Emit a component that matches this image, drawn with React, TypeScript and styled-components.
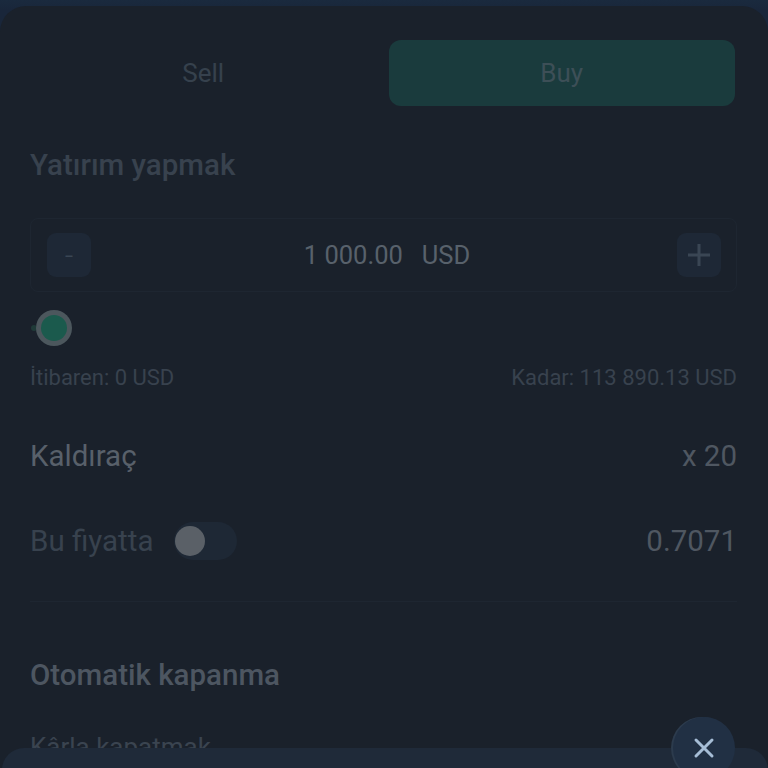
import React from "react";
import styled, { createGlobalStyle } from "styled-components";

const Global = createGlobalStyle`
  html, body { margin: 0; padding: 0; background: #19283a; }
  body { font-family: Roboto, "Noto Sans", sans-serif; overflow: hidden; }
  #root { width: 768px; height: 768px; overflow: hidden; position: relative; }
`;

const Page = styled.div`
  height: 768px;
  background: linear-gradient(180deg, #1a2a3e 0px, #19263a 10px);
  padding-top: 6px;
  box-sizing: border-box;
  position: relative;
  overflow: hidden;
`;

const Card = styled.div`
  background: #1a212b;
  border-radius: 26px 26px 0 0;
  height: 100%;
  padding: 34px 31px 0 30px;
  box-sizing: border-box;
  display: flex;
  flex-direction: column;
`;

const Segmented = styled.div`
  display: grid;
  grid-template-columns: 1fr 1fr;
  gap: 12px;
  height: 66px;
  margin-right: 2px;
`;

const SegButton = styled.div<{ $active?: boolean }>`
  display: flex;
  align-items: center;
  justify-content: center;
  border-radius: 12px;
  font-size: 26px;
  color: ${(p) => (p.$active ? "#3d4f57" : "#36414d")};
  background: ${(p) => (p.$active ? "#1a3b3d" : "transparent")};
`;

const SectionTitle = styled.div<{ $mt: number; $bright?: boolean }>`
  margin-top: ${(p) => p.$mt}px;
  font-size: 29.5px;
  font-weight: 500;
  color: ${(p) => (p.$bright ? "#4d5661" : "#38424e")};
  line-height: 34px;
`;

const InputBox = styled.div`
  margin-top: 36px;
  height: 74px;
  border: 1px solid #1e2631;
  border-radius: 8px;
  display: flex;
  align-items: center;
  padding: 0 15px 0 16px;
  box-sizing: border-box;
`;

const StepBtn = styled.div`
  width: 44px;
  height: 44px;
  border-radius: 9px;
  background: #1e2836;
  display: flex;
  align-items: center;
  justify-content: center;
  color: #3a4654;
  font-size: 30px;
  font-weight: 300;
`;

const Amount = styled.div`
  flex: 1;
  display: flex;
  justify-content: center;
  gap: 19px;
  font-size: 25.5px;
  color: #58616b;
  padding-left: 6px;
`;

const SliderRow = styled.div`
  margin-top: 18px;
  height: 36px;
  display: flex;
  align-items: center;
`;

const SliderDot = styled.div`
  width: 6px;
  height: 6px;
  border-radius: 50%;
  background: #1f3a38;
  margin-left: 1px;
`;

const Thumb = styled.div`
  width: 36px;
  height: 36px;
  border-radius: 50%;
  background: #4c575d;
  margin-left: -1px;
  display: flex;
  align-items: center;
  justify-content: center;
  &::after {
    content: "";
    width: 26px;
    height: 26px;
    border-radius: 50%;
    background: #1b5a4d;
  }
`;

const RangeRow = styled.div`
  margin-top: 19px;
  display: flex;
  justify-content: space-between;
  font-size: 22px;
  line-height: 26px;
  color: #38424e;
`;

const Row = styled.div<{ $mt: number }>`
  margin-top: ${(p) => p.$mt}px;
  display: flex;
  align-items: center;
  justify-content: space-between;
  height: 40px;
`;

const Label = styled.div<{ $dim?: boolean }>`
  font-size: 29.5px;
  color: ${(p) => (p.$dim ? "#38424e" : "#58606a")};
  display: flex;
  align-items: center;
  gap: 21px;
`;

const Value = styled.div`
  font-size: 29.5px;
  color: #4f5761;
`;

const Toggle = styled.div`
  width: 63px;
  height: 38px;
  border-radius: 19px;
  background: #1e2835;
  display: flex;
  align-items: center;
  padding-left: 1px;
  box-sizing: border-box;
  &::before {
    content: "";
    width: 30px;
    height: 30px;
    border-radius: 50%;
    background: #5a6067;
  }
`;

const Divider = styled.div`
  margin-top: 40px;
  height: 1px;
  background: #1e2631;
`;

const SubLabel = styled.div`
  margin-top: 40px;
  font-size: 26px;
  color: #3a4450;
`;

const Sheet = styled.div`
  position: absolute;
  left: 2px;
  right: 0;
  top: 748px;
  height: 60px;
  background: #1f2a39;
  border-radius: 22px 22px 0 0;
`;

const CloseBtn = styled.div`
  position: absolute;
  left: 673px;
  top: 717px;
  width: 62px;
  height: 62px;
  border-radius: 50%;
  background: #213044;
  box-shadow: -2px 0 0 #2c3b4d;
  display: flex;
  align-items: center;
  justify-content: center;
`;

export default function App() {
  return (
    <>
      <Global />
      <Page>
        <Card>
          <Segmented>
            <SegButton>Sell</SegButton>
            <SegButton $active>Buy</SegButton>
          </Segmented>
          <SectionTitle $mt={42}>Yatırım yapmak</SectionTitle>
          <InputBox>
            <StepBtn>-</StepBtn>
            <Amount>
              <span>1 000.00</span>
              <span>USD</span>
            </Amount>
            <StepBtn>
              <svg width="24" height="24" viewBox="0 0 24 24">
                <path d="M12 1v22M1 12h22" stroke="#3a4654" strokeWidth="3" />
              </svg>
            </StepBtn>
          </InputBox>
          <SliderRow>
            <SliderDot />
            <Thumb />
          </SliderRow>
          <RangeRow>
            <span>İtibaren: 0 USD</span>
            <span>Kadar: 113 890.13 USD</span>
          </RangeRow>
          <Row $mt={45}>
            <Label>Kaldıraç</Label>
            <Value>x 20</Value>
          </Row>
          <Row $mt={45}>
            <Label $dim>
              Bu fiyatta
              <Toggle />
            </Label>
            <Value>0.7071</Value>
          </Row>
          <Divider />
          <SectionTitle $mt={56} $bright>
            Otomatik kapanma
          </SectionTitle>
          <SubLabel>Kârla kapatmak</SubLabel>
        </Card>
        <Sheet />
        <CloseBtn>
          <svg width="22" height="22" viewBox="0 0 22 22">
            <path d="M3 3l16 16M19 3L3 19" stroke="#a6bdd6" strokeWidth="3" strokeLinecap="round" />
          </svg>
        </CloseBtn>
      </Page>
    </>
  );
}
